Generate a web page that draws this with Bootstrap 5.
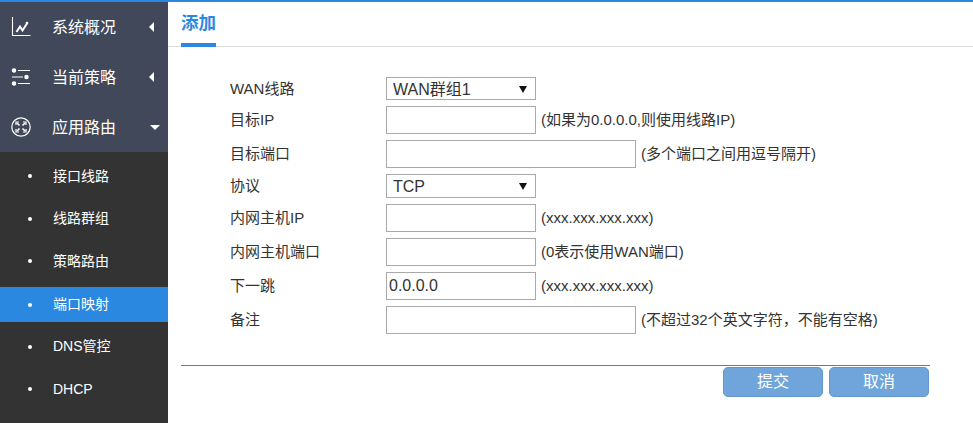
<!DOCTYPE html>
<html lang="zh-CN">
<head>
    <meta charset="UTF-8">
    <meta name="viewport" content="width=device-width, initial-scale=1.0">
    <title>添加</title>
    <link rel="stylesheet" href="https://cdn.jsdelivr.net/npm/bootstrap@5.3.0/dist/css/bootstrap.min.css">
    <style>
        html, body { height: 100%; overflow: hidden; }
        body { font-family: "Liberation Sans", "Noto Sans CJK SC", sans-serif; font-size: 15px; color: #333; border-top: 2px solid #2b88e0; }
        .side-menu { width: 168px; background: #333; flex: none; }
        .menu-top { height: 50px; background: #414859; color: #fff; font-size: 16px; padding-left: 11px; padding-right: 9px; }
        .menu-top span { flex: 1; padding-top: 2px; }
        .menu-top svg { width: 20px; height: 20px; margin-right: 21px; flex: none; }
        .arrow-left { border-top: 5px solid transparent; border-bottom: 5px solid transparent; border-right: 5px solid #fff; margin-right: 5px; }
        .arrow-down { border-left: 5px solid transparent; border-right: 5px solid transparent; border-top: 5px solid #fff; margin-right: -1px; margin-left: -3px; }
        .sub-list { padding-top: 3px; }
        .sub-item { height: 42.6px; color: #fff; padding-left: 28px; font-size: 14px; }
        .sub-item i { width: 4px; height: 4px; border-radius: 50%; background: #fff; margin-right: 21px; }
        .sub-item.on { background: #2b88e0; height: 35px; margin: 4.6px 0 3px; }
        .head-bar { height: 45px; border-bottom: 1px solid #ddd; padding-left: 13px; }
        .head-bar h1 { display: inline-block; height: 45px; margin: 0; padding-top: 11px; font-size: 17.5px; font-weight: 700; color: #2b88e0; border-bottom: 4px solid #2b88e0; }
        .form-wrap { padding: 30px 0 0 62px; }
        .form-line { margin-bottom: 6px; height: 28px; }
        .form-line.short { height: 24px; }
        .form-line.first { height: 23px; }
        .form-line label { width: 156px; flex: none; color: #333; margin: 0; padding-top: 1px; }
        .form-line .hint { margin-left: 5px; color: #333; }
        .txt { width: 150px; height: 100%; border: 1px solid #aaa; padding: 0 2px; font-size: 16px; color: #333; outline: 0; }
        .txt.wide { width: 250px; }
        .pick { width: 150px; height: 100%; border: 1px solid #aaa; padding: 0 0 0 6px; font-size: 16px; color: #333; outline: 0; appearance: none; border-radius: 0; background: #fff url("data:image/svg+xml,%3Csvg xmlns='http://www.w3.org/2000/svg' width='8' height='8'%3E%3Cpath d='M0 1h8L4 8z' fill='%23111'/%3E%3C/svg%3E") no-repeat right 8px center; }
        .foot-bar { margin: 31px 0 0 13px; width: 749px; border-top: 1px solid #777; padding: 1px 1px 0 0; gap: 6px; }
        .act-btn { width: 100px; height: 30px; padding: 0; background: #6fa5da; border: 1px solid #6397c9; border-radius: 5px; color: #fff; font-size: 16px; }
    </style>
</head>
<body class="d-flex">

<div class="side-menu">
    <div class="menu-top d-flex align-items-center">
        <svg viewBox="0 0 20 20" fill="none" stroke="#fff" stroke-width="1.1"><path d="M1.5 0v18.5h18"/><path d="M5.5 15 9 9.5l2.5 4L16 6.5" stroke-width="2"/><circle cx="16" cy="6" r="1.3" fill="#fff" stroke="none"/></svg>
        <span>系统概况</span><b class="arrow-left"></b>
    </div>
    <div class="menu-top d-flex align-items-center">
        <svg viewBox="0 0 20 20" fill="#fff" stroke="#fff" stroke-width="1.1"><path d="M7 3.5h12M1 10h11M7 16.5h12" fill="none"/><circle cx="3" cy="3.5" r="1.7"/><circle cx="15.5" cy="10" r="1.7"/><circle cx="3" cy="16.5" r="1.7"/></svg>
        <span>当前策略</span><b class="arrow-left"></b>
    </div>
    <div class="menu-top d-flex align-items-center">
        <svg viewBox="0 0 20 20" fill="none" stroke="#fff" stroke-width="1.2"><circle cx="10" cy="10" r="9.2"/><path d="M6 6l2.5 2.5M14 6l-2.5 2.5M6 14l2.5-2.5M14 14l-2.5-2.5" stroke-width="1.6"/><path d="M5 8V5h3M12 5h3v3M5 12v3h3M15 12v3h-3" stroke-width="1.2"/></svg>
        <span>应用路由</span><b class="arrow-down"></b>
    </div>
    <div class="sub-list">
        <div class="sub-item d-flex align-items-center"><i></i>接口线路</div>
        <div class="sub-item d-flex align-items-center"><i></i>线路群组</div>
        <div class="sub-item d-flex align-items-center"><i></i>策略路由</div>
        <div class="sub-item on d-flex align-items-center"><i></i>端口映射</div>
        <div class="sub-item d-flex align-items-center"><i></i>DNS管控</div>
        <div class="sub-item d-flex align-items-center"><i></i>DHCP</div>
    </div>
</div>

<div class="flex-grow-1">
    <div class="head-bar"><h1>添加</h1></div>
    <form class="form-wrap">
        <div class="form-line first d-flex align-items-center">
            <label>WAN线路</label>
            <select class="pick"><option>WAN群组1</option></select>
        </div>
        <div class="form-line d-flex align-items-center">
            <label>目标IP</label>
            <input type="text" class="txt">
            <span class="hint">(如果为0.0.0.0,则使用线路IP)</span>
        </div>
        <div class="form-line d-flex align-items-center">
            <label>目标端口</label>
            <input type="text" class="txt wide">
            <span class="hint">(多个端口之间用逗号隔开)</span>
        </div>
        <div class="form-line short d-flex align-items-center">
            <label>协议</label>
            <select class="pick"><option>TCP</option></select>
        </div>
        <div class="form-line d-flex align-items-center">
            <label>内网主机IP</label>
            <input type="text" class="txt">
            <span class="hint">(xxx.xxx.xxx.xxx)</span>
        </div>
        <div class="form-line d-flex align-items-center">
            <label>内网主机端口</label>
            <input type="text" class="txt">
            <span class="hint">(0表示使用WAN端口)</span>
        </div>
        <div class="form-line d-flex align-items-center">
            <label>下一跳</label>
            <input type="text" class="txt" value="0.0.0.0">
            <span class="hint">(xxx.xxx.xxx.xxx)</span>
        </div>
        <div class="form-line d-flex align-items-center">
            <label>备注</label>
            <input type="text" class="txt wide">
            <span class="hint">(不超过32个英文字符，不能有空格)</span>
        </div>
    </form>
    <div class="foot-bar d-flex justify-content-end">
        <button type="button" class="act-btn">提交</button>
        <button type="button" class="act-btn">取消</button>
    </div>
</div>

<script src="https://cdn.jsdelivr.net/npm/bootstrap@5.3.0/dist/js/bootstrap.bundle.min.js"></script>
</body>
</html>
